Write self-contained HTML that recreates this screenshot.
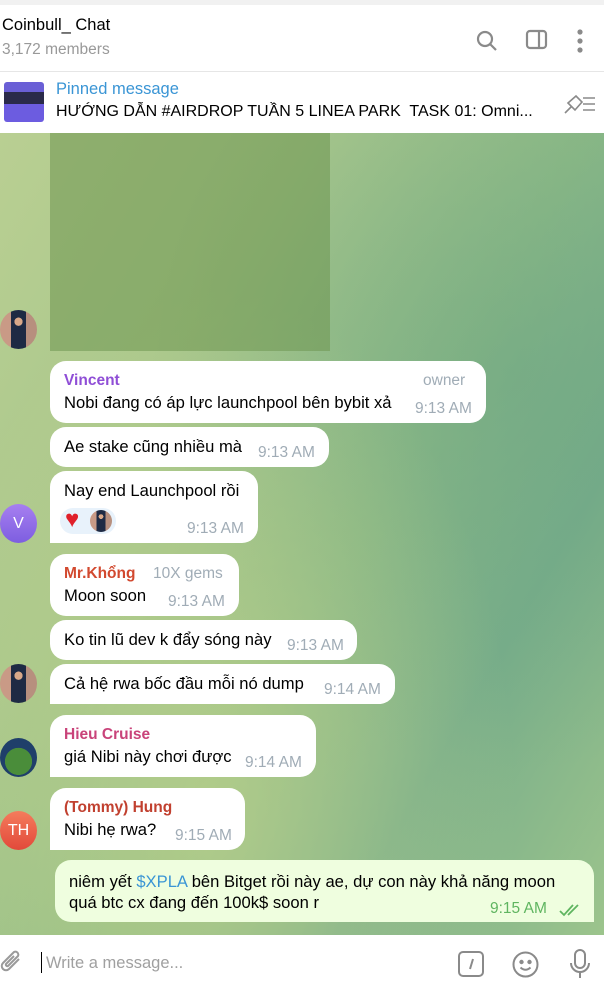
<!DOCTYPE html>
<html><head><meta charset="utf-8"><style>
*{margin:0;padding:0;box-sizing:border-box}
body{width:604px;height:985px;overflow:hidden;position:relative;font-family:"Liberation Sans","Noto Sans CJK SC",sans-serif;background:#fff}
.a{position:absolute;white-space:nowrap}
#top{position:absolute;left:0;top:0;width:604px;height:5px;background:#f1f1f1}
#hdr{position:absolute;left:0;top:5px;width:604px;height:67px;background:#fff;border-bottom:1px solid #e6e6e6}
#pin{position:absolute;left:0;top:73px;width:604px;height:60px;background:#fff}
#chat{position:absolute;left:0;top:133px;width:604px;height:802px;background:linear-gradient(120deg,#b9cf92 0%,#a9c78c 30%,#8fbb86 55%,#79ae8a 75%,#9cc48c 100%)}
#chat:after{content:"";position:absolute;inset:0;background:radial-gradient(ellipse at 35% 85%,rgba(200,215,140,.6),transparent 55%),radial-gradient(ellipse at 85% 30%,rgba(100,160,130,.45),transparent 50%)}
#inp{position:absolute;left:0;top:935px;width:604px;height:50px;background:#fff}
.b{position:absolute;background:#fff;border-radius:16px;font-size:16.6px;color:#000;z-index:2}
.b .t{position:absolute;white-space:nowrap}
.tm{position:absolute;color:#a0acb6;font-size:15.5px;white-space:nowrap}
.nm{position:absolute;font-size:15.5px;font-weight:bold;white-space:nowrap}
.av{position:absolute;left:0;width:37px;height:39px;border-radius:50%;z-index:2;color:#fff;font-size:16px;text-align:center;line-height:39px}
.photo{background:radial-gradient(circle at 50% 30%,#d9a889 0 12%,transparent 13%),linear-gradient(90deg,#c99a86 0 30%,#1e2a44 30% 70%,#b78f7e 70%)}
</style></head><body>
<div id="top"></div>
<div id="hdr">
<div class="a" style="left:2px;top:11px;font-size:16.5px;color:#000">Coinbull_ Chat</div>
<div class="a" style="left:2px;top:36px;font-size:15.5px;color:#999">3,172 members</div>
<svg class="a" style="left:474px;top:23px" width="26" height="26" viewBox="0 0 26 26" fill="none" stroke="#8a8a8a" stroke-width="2.2"><circle cx="11" cy="11" r="7"/><path d="M16 16l6 6"/></svg>
<svg class="a" style="left:525px;top:23px" width="24" height="24" viewBox="0 0 24 24" fill="none" stroke="#8a8a8a" stroke-width="2.2"><rect x="2" y="3" width="19" height="17" rx="3"/><path d="M14 3v17"/></svg>
<svg class="a" style="left:574px;top:22px" width="12" height="28" viewBox="0 0 12 28" fill="#8a8a8a"><circle cx="6" cy="5" r="2.6"/><circle cx="6" cy="14" r="2.6"/><circle cx="6" cy="23" r="2.6"/></svg>
</div>
<div id="pin">
<div class="a" style="left:4px;top:9px;width:40px;height:40px;border-radius:3px;background:linear-gradient(180deg,#6a5fd6 0 25%,#2a2a4a 25% 55%,#6c5ce0 55%)"></div>
<div class="a" style="left:56px;top:7px;font-size:16.5px;color:#3a95d5">Pinned message</div>
<div class="a" style="left:56px;top:30px;font-size:16px;color:#000">HƯỚNG DẪN #AIRDROP TUẦN 5 LINEA PARK&nbsp; TASK 01: Omni...</div>
<svg class="a" style="left:563px;top:20px" width="34" height="22" viewBox="0 0 34 22" fill="none" stroke="#8a8a8a" stroke-width="1.6"><path d="M2 20l6-6M5 10l8-7 6 6-7 8zM20 5h12M20 11h12M20 17h12"/></svg>
</div>
<div id="chat">
<div style="position:absolute;left:50px;top:0;width:280px;height:218px;background:rgba(110,150,80,.55);z-index:2"></div>
</div>
<div class="av photo" style="top:310px"></div>

<div class="b" style="left:50px;top:361px;width:436px;height:62px">
<div class="nm" style="left:14px;top:11px;color:#8f4ed6">Vincent</div>
<div class="tm" style="left:373px;top:11px;font-size:15.5px">owner</div>
<div class="t" style="left:14px;top:32px">Nobi đang có áp lực launchpool bên bybit xả</div>
<div class="tm" style="left:365px;top:39px">9:13 AM</div></div>

<div class="b" style="left:50px;top:427px;width:279px;height:40px">
<div class="t" style="left:14px;top:10px">Ae stake cũng nhiều mà</div>
<div class="tm" style="left:208px;top:17px">9:13 AM</div></div>

<div class="b" style="left:50px;top:471px;width:208px;height:72px;border-bottom-left-radius:0">
<div class="t" style="left:14px;top:10px">Nay end Launchpool rồi</div>
<div style="position:absolute;left:10px;top:37px;width:56px;height:26px;border-radius:13px;background:#e8f2fb"></div>
<div style="position:absolute;left:15px;top:36px;font-size:24px;line-height:26px;color:#e0202a">♥</div>
<div style="position:absolute;left:40px;top:39px;width:22px;height:22px;border-radius:50%" class="photo"></div>
<div class="tm" style="left:137px;top:49px">9:13 AM</div></div>
<div class="av" style="top:504px;background:linear-gradient(#a77ff0,#7d5ee0)">V</div>

<div class="b" style="left:50px;top:554px;width:189px;height:62px">
<div class="nm" style="left:14px;top:11px;color:#d2492f">Mr.Khổng</div>
<div class="tm" style="left:103px;top:11px">10X gems</div>
<div class="t" style="left:14px;top:32px">Moon soon</div>
<div class="tm" style="left:118px;top:39px">9:13 AM</div></div>

<div class="b" style="left:50px;top:620px;width:307px;height:40px">
<div class="t" style="left:14px;top:10px">Ko tin lũ dev k đẩy sóng này</div>
<div class="tm" style="left:237px;top:17px">9:13 AM</div></div>

<div class="b" style="left:50px;top:664px;width:345px;height:40px;border-bottom-left-radius:0">
<div class="t" style="left:14px;top:10px">Cả hệ rwa bốc đầu mỗi nó dump</div>
<div class="tm" style="left:274px;top:17px">9:14 AM</div></div>
<div class="av photo" style="top:664px"></div>

<div class="b" style="left:50px;top:715px;width:266px;height:62px;border-bottom-left-radius:0">
<div class="nm" style="left:14px;top:11px;color:#c9437a">Hieu Cruise</div>
<div class="t" style="left:14px;top:32px">giá Nibi này chơi được</div>
<div class="tm" style="left:195px;top:39px">9:14 AM</div></div>
<div class="av" style="top:738px;background:radial-gradient(circle at 50% 60%,#4a8d3a 0 45%,#1f3f6a 46%);"></div>

<div class="b" style="left:50px;top:788px;width:195px;height:62px;border-bottom-left-radius:0">
<div class="nm" style="left:14px;top:11px;color:#c1402f">(Tommy) Hung</div>
<div class="t" style="left:14px;top:32px">Nibi hẹ rwa?</div>
<div class="tm" style="left:125px;top:39px">9:15 AM</div></div>
<div class="av" style="top:811px;background:linear-gradient(#f47c5c,#e2493a)">TH</div>

<div class="b" style="left:55px;top:860px;width:539px;height:62px;background:#effedf;border-bottom-right-radius:0">
<div class="t" style="left:14px;top:12px">niêm yết <span style="color:#3a95d5">$XPLA</span> bên Bitget rồi này ae, dự con này khả năng moon</div>
<div class="t" style="left:14px;top:33px">quá btc cx đang đến 100k$ soon r</div>
<div class="tm" style="left:435px;top:40px;color:#5fb560">9:15 AM</div>
<svg style="position:absolute;left:504px;top:43px" width="22" height="14" viewBox="0 0 22 14" fill="none" stroke="#5fb560" stroke-width="1.8"><path d="M1 8l4 4 9-10M9 12l10-10"/></svg></div>

<div id="inp">
<svg class="a" style="left:0;top:15px" width="24" height="26" viewBox="0 0 24 26" fill="none" stroke="#9a9a9a" stroke-width="2"><path d="M19 9l-10 10a4 4 0 01-6-6L14 2a3 3 0 014 4L8 16a1.5 1.5 0 01-2-2l8-8"/></svg>
<div class="a" style="left:41px;top:17px;width:1px;height:21px;background:#000"></div>
<div class="a" style="left:46px;top:19px;font-size:16.5px;color:#a0a0a0">Write a message...</div>
<svg class="a" style="left:457px;top:15px" width="28" height="28" viewBox="0 0 28 28" fill="none" stroke="#8a8a8a" stroke-width="2"><rect x="2" y="2" width="24" height="24" rx="4"/><path d="M16 9l-3 10"/></svg>
<svg class="a" style="left:511px;top:15px" width="29" height="29" viewBox="0 0 29 29" fill="none" stroke="#8a8a8a" stroke-width="2"><circle cx="14.5" cy="14.5" r="12"/><circle cx="10.5" cy="12" r="1.2" fill="#8a8a8a"/><circle cx="18.5" cy="12" r="1.2" fill="#8a8a8a"/><path d="M9.5 17.5q5 4.5 10 0"/></svg>
<svg class="a" style="left:568px;top:13px" width="24" height="32" viewBox="0 0 24 32" fill="none" stroke="#8a8a8a" stroke-width="2"><rect x="7" y="2" width="10" height="18" rx="5"/><path d="M3 15a9 9 0 0018 0M12 24v6"/></svg>
</div>
</body></html>
